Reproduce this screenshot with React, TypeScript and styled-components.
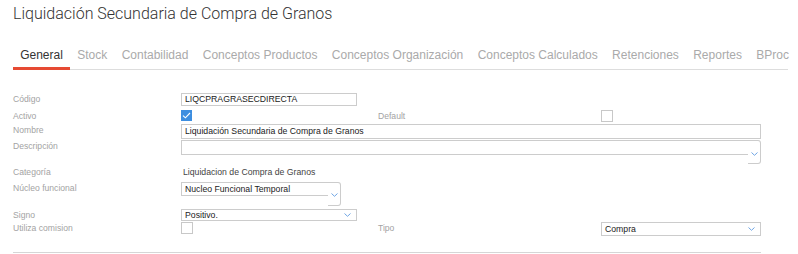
import React from "react";
import styled, { createGlobalStyle } from "styled-components";

const Global = createGlobalStyle`
  html, body { margin: 0; padding: 0; background: #fff; }
  body { font-family: "Liberation Sans", Arial, sans-serif; }
`;

const Page = styled.div`
  width: 798px;
  height: 254px;
  overflow: hidden;
  padding: 0 0 0 13px;
  box-sizing: border-box;
`;

const Title = styled.h1`
  margin: 0;
  padding-top: 3px;
  height: 36px;
  box-sizing: border-box;
  font-family: Roboto, sans-serif;
  font-weight: 300;
  font-size: 16px;
  line-height: 22px;
  color: #333;
`;

const Tabs = styled.div`
  display: flex;
  width: 775px;
  height: 34px;
  border-bottom: 1px solid #ddd;
  box-sizing: border-box;
`;

const Tab = styled.div<{ $active?: boolean }>`
  padding: 11px 7.2px 0;
  font-family: "Liberation Sans", Arial, sans-serif;
  font-size: 12px;
  line-height: 17px;
  color: ${(p) => (p.$active ? "#333" : "#aaa")};
  border-bottom: 3px solid ${(p) => (p.$active ? "#e64a33" : "transparent")};
  margin-bottom: -1px;
  white-space: nowrap;
`;

const Form = styled.div`
  padding-top: 23px;
  width: 748px;
`;

const Row = styled.div<{ $h: number; $mt?: number }>`
  display: grid;
  grid-template-columns: 168px 196px 224px 160px;
  align-items: start;
  height: ${(p) => p.$h}px;
  margin-top: ${(p) => p.$mt ?? 0}px;
`;

const Label = styled.div`
  font-family: "Liberation Sans", Arial, sans-serif;
  font-size: 8.6px;
  line-height: 12px;
  color: #a3a3a3;
`;

const SecondLabel = styled(Label)`
  padding-left: 1px;
`;

const Input = styled.div<{ $w?: string; $h?: number; $span?: boolean }>`
  grid-column: ${(p) => (p.$span ? "2 / 5" : "auto")};
  width: ${(p) => p.$w ?? "100%"};
  height: ${(p) => p.$h ?? 13}px;
  box-sizing: border-box;
  border: 1px solid #ccc;
  padding: 0 3px;
  font-family: "Liberation Sans", Arial, sans-serif;
  font-size: 8.7px;
  line-height: ${(p) => (p.$h ?? 13) - 2}px;
  color: #222;
  white-space: nowrap;
  overflow: hidden;
`;

const Select = styled(Input)`
  display: flex;
  align-items: center;
  justify-content: space-between;
  padding-right: 5px;
`;

const Combo = styled.div<{ $span?: boolean; $w?: string }>`
  grid-column: ${(p) => (p.$span ? "2 / 5" : "auto")};
  width: ${(p) => p.$w ?? "100%"};
  display: flex;
  align-items: flex-start;
`;

const ComboField = styled.div<{ $h: number }>`
  flex: 1;
  height: ${(p) => p.$h}px;
  box-sizing: border-box;
  border: 1px solid #ccc;
  border-right: none;
  padding: 0 3px;
  font-family: "Liberation Sans", Arial, sans-serif;
  font-size: 8.7px;
  line-height: ${(p) => p.$h - 2}px;
  color: #222;
  white-space: nowrap;
`;

const ComboButton = styled.div<{ $h: number; $arrowTop: number }>`
  width: 13px;
  height: ${(p) => p.$h}px;
  box-sizing: border-box;
  border: 1px solid #ccc;
  border-left: none;
  border-radius: 0 3px 3px 0;
  padding-top: ${(p) => p.$arrowTop}px;
  display: flex;
  justify-content: center;
  align-items: flex-start;
`;

const Check = styled.div<{ $checked?: boolean; $size?: number }>`
  width: ${(p) => p.$size ?? 12}px;
  height: ${(p) => p.$size ?? 12}px;
  box-sizing: border-box;
  border: 1px solid ${(p) => (p.$checked ? "#3d8ee0" : "#c8c8c8")};
  background: ${(p) => (p.$checked ? "#3d8ee0" : "#fff")};
  display: flex;
  align-items: center;
  justify-content: center;
`;

const Value = styled.div`
  font-family: "Liberation Sans", Arial, sans-serif;
  font-size: 8.7px;
  line-height: 12px;
  color: #444;
  padding-left: 2px;
`;

const Rule = styled.div`
  margin-top: 16px;
  height: 1px;
  background: #d6d6d6;
  width: 748px;
`;

const Arrow = () => (
  <svg width="7" height="4" viewBox="0 0 7 4">
    <path d="M0.5 0.5 L3.5 3.3 L6.5 0.5" fill="none" stroke="#6fa6e4" strokeWidth="1" />
  </svg>
);

const Tick = () => (
  <svg width="9" height="7" viewBox="0 0 9 7">
    <path d="M1 3.6 L3.4 5.8 L8 1" fill="none" stroke="#fff" strokeWidth="1.1" />
  </svg>
);

const tabs = [
  "General",
  "Stock",
  "Contabilidad",
  "Conceptos Productos",
  "Conceptos Organización",
  "Conceptos Calculados",
  "Retenciones",
  "Reportes",
  "BProc",
];

export default function App() {
  return (
    <Page>
      <Global />
      <Title>Liquidación Secundaria de Compra de Granos</Title>
      <Tabs>
        {tabs.map((t, i) => (
          <Tab key={t} $active={i === 0}>
            {t}
          </Tab>
        ))}
      </Tabs>
      <Form>
        <Row $h={16}>
          <Label>Código</Label>
          <Input $w="176px">LIQCPRAGRASECDIRECTA</Input>
        </Row>
        <Row $h={14} $mt={1}>
          <Label>Activo</Label>
          <Check $checked $size={11}>
            <Tick />
          </Check>
          <SecondLabel>Default</SecondLabel>
          <Check $size={12} />
        </Row>
        <Row $h={16}>
          <Label>Nombre</Label>
          <Input $span $h={15}>
            Liquidación Secundaria de Compra de Granos
          </Input>
        </Row>
        <Row $h={26}>
          <Label>Descripción</Label>
          <Combo $span>
            <ComboField $h={15} />
            <ComboButton $h={24} $arrowTop={11}>
              <Arrow />
            </ComboButton>
          </Combo>
        </Row>
        <Row $h={16}>
          <Label>Categoría</Label>
          <Value>Liquidacion de Compra de Granos</Value>
        </Row>
        <Row $h={27}>
          <Label>Núcleo funcional</Label>
          <Combo $w="160px">
            <ComboField $h={14}>Nucleo Funcional Temporal</ComboField>
            <ComboButton $h={24} $arrowTop={10}>
              <Arrow />
            </ComboButton>
          </Combo>
        </Row>
        <Row $h={13}>
          <Label>Signo</Label>
          <Select $w="176px" $h={12}>
            <span>Positivo.</span>
            <Arrow />
          </Select>
        </Row>
        <Row $h={14}>
          <Label>Utiliza comision</Label>
          <Check $size={12} />
          <SecondLabel>Tipo</SecondLabel>
          <Select $h={14}>
            <span>Compra</span>
            <Arrow />
          </Select>
        </Row>
        <Rule />
      </Form>
    </Page>
  );
}
